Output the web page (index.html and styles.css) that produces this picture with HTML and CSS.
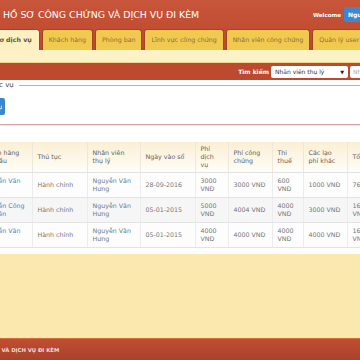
FILE: index.html
```html
<!DOCTYPE html>
<html lang="vi">
<head>
<meta charset="utf-8">
<title>Hồ sơ công chứng</title>
<link rel="stylesheet" href="styles.css">
</head>
<body>
<div class="app">
  <header class="top">
    <div class="brand">
      <h1 class="title">HỒ SƠ CÔNG CHỨNG VÀ DỊCH VỤ ĐI KÈM</h1>
      <div class="user"><span class="welcome">Welcome</span><span class="user-btn">Nguyễn Văn Hưng</span></div>
    </div>
    <nav class="tabs">
      <span class="tab active">Hồ sơ dịch vụ</span>
      <span class="tab">Khách hàng</span>
      <span class="tab">Phòng ban</span>
      <span class="tab">Lĩnh vực công chứng</span>
      <span class="tab">Nhân viên công chứng</span>
      <span class="tab">Quản lý user</span>
    </nav>
  </header>
  <div class="strip"></div>
  <div class="searchbar">
    <span class="search-label">Tìm kiếm</span>
    <div class="select"><span>Nhân viên thụ lý</span><span class="arrow">▼</span></div>
    <div class="input">Nhập từ khóa</div>
  </div>
  <main class="content">
    <fieldset class="box">
      <legend>Phục vụ</legend>
      <button class="add">Thêm dịch vụ</button>
    </fieldset>
    <table class="grid">
      <colgroup>
        <col class="c1"><col class="c2"><col class="c3"><col class="c4"><col class="c5"><col class="c6"><col class="c7"><col class="c8"><col class="c9">
      </colgroup>
      <thead>
        <tr><th>Khách hàng yêu cầu</th><th>Thủ tục</th><th>Nhân viên thụ lý</th><th>Ngày vào sổ</th><th>Phí dịch vụ</th><th>Phí công chứng</th><th>Thi thuế</th><th>Các lạo phí khác</th><th>Tổng tiền</th></tr>
      </thead>
      <tbody>
        <tr><td><a>Nguyễn Văn An</a></td><td>Hành chính</td><td>Nguyễn Văn Hưng</td><td>28-09-2016</td><td>3000 VNĐ</td><td>3000 VNĐ</td><td>600 VNĐ</td><td>1000 VNĐ</td><td>7600 VNĐ</td></tr>
        <tr><td><a>Nguyễn Công Nguyên</a></td><td>Hành chính</td><td>Nguyễn Văn Hưng</td><td>05-01-2015</td><td>5000 VNĐ</td><td>4004 VNĐ</td><td>4000 VNĐ</td><td>3000 VNĐ</td><td>16004 VNĐ</td></tr>
        <tr><td><a>Nguyễn Văn Ba</a></td><td>Hành chính</td><td>Nguyễn Văn Hưng</td><td>05-01-2015</td><td>4000 VNĐ</td><td>4000 VNĐ</td><td>4000 VNĐ</td><td>4000 VNĐ</td><td>16000 VNĐ</td></tr>
      </tbody>
    </table>
  </main>
  <div class="filler"></div>
  <footer class="foot"><span class="foot-text">HỒ SƠ CÔNG CHỨNG VÀ DỊCH VỤ ĐI KÈM</span></footer>
</div>
</body>
</html>
```
FILE: styles.css
```css
* { box-sizing: border-box; }
html, body { margin: 0; padding: 0; }
body {
  width: 360px;
  height: 360px;
  overflow: hidden;
  font-family: "DejaVu Sans", Verdana, sans-serif;
  background: #fbe8ae;
}
.app {
  width: 360px;
  height: 360px;
  display: flex;
  flex-direction: column;
  overflow: hidden;
}
.top {
  background: linear-gradient(#c8563b, #bc472d);
}
.brand {
  height: 29px;
  display: flex;
  align-items: center;
  justify-content: space-between;
}
.title {
  margin: 0 0 0 3px;
  font-size: 9.4px;
  font-weight: normal;
  color: #fff;
  white-space: nowrap;
}
.user {
  width: 47px;
  display: flex;
  align-items: center;
  gap: 3px;
  overflow: hidden;
  white-space: nowrap;
}
.welcome {
  font-size: 5.5px;
  font-weight: bold;
  color: #fff;
  flex-shrink: 0;
}
.user-btn {
  flex-shrink: 0;
  background: #3b88cf;
  color: #fff;
  font-weight: bold;
  font-size: 6px;
  padding: 4px 4px;
  border-radius: 2px;
}
.tabs {
  display: flex;
  align-items: flex-end;
  gap: 2px;
  height: 21px;
  margin-left: -24px;
  white-space: nowrap;
}
.tab {
  height: 21px;
  line-height: 20px;
  padding: 0 6px;
  font-size: 6.3px;
  color: #8c6d3c;
  background: #f1c94f;
  border: 1px solid #a4432a;
  border-bottom: 0;
  border-radius: 3px 3px 0 0;
  flex-shrink: 0;
}
.tab.active {
  background: #fdf1c4;
  color: #6a4f2c;
  font-weight: bold;
  padding: 0 7px;
}
.strip {
  height: 13px;
  background: #fdf2c5;
  border-bottom: 1px solid #f1d58c;
}
.searchbar {
  height: 17px;
  background: #bd4a2f;
  display: flex;
  align-items: center;
  justify-content: flex-end;
  gap: 2px;
  overflow: hidden;
}
.search-label {
  font-size: 6px;
  font-weight: bold;
  color: #fff;
  white-space: nowrap;
}
.select {
  width: 77px;
  height: 12px;
  background: #fff;
  border-radius: 2px;
  display: flex;
  align-items: center;
  justify-content: space-between;
  padding: 0 4px;
  font-size: 6px;
  color: #333;
  white-space: nowrap;
}
.arrow { font-size: 5px; color: #222; }
.input {
  width: 30px;
  height: 12px;
  margin-right: -20px;
  background: #fff;
  border-radius: 2px;
  padding: 0 3px;
  font-size: 6px;
  line-height: 12px;
  color: #aaa;
  white-space: nowrap;
  overflow: hidden;
  flex-shrink: 0;
}
.content {
  background: #fff;
  padding: 1px 0 6px;
  overflow: hidden;
}
.box {
  margin: 0 -10px 0 -20px;
  padding: 8px 0 9px;
  border: 1px solid #d6a3a3;
  box-shadow: 0 1px 0 #f3e4e4;
}
.box legend {
  margin: 0;
  padding: 0 5px;
  font-size: 7px;
  line-height: 9px;
  color: #444;
}
.add {
  display: block;
  margin-left: -28px;
  height: 17px;
  padding: 0 3px 0 5px;
  background: #3b87cf;
  color: #fff;
  border: 0;
  border-radius: 2px;
  font-family: "DejaVu Sans", Verdana, sans-serif;
  font-size: 6.5px;
  white-space: nowrap;
}
.grid {
  margin: 17px 0 0 -23px;
  border-collapse: collapse;
  table-layout: fixed;
  width: 414px;
  font-size: 6.3px;
  line-height: 8px;
}
.c1 { width: 55px; }
.c2 { width: 55px; }
.c3 { width: 53px; }
.c4 { width: 55px; }
.c5 { width: 33px; }
.c6 { width: 44px; }
.c7 { width: 31px; }
.c8 { width: 44px; }
.c9 { width: 44px; }
.grid th {
  text-align: left;
  vertical-align: middle;
  font-weight: normal;
  color: #5f5f5f;
  padding: 3px 5px;
  background: linear-gradient(#fbefd3, #fffdf9);
  border-right: 1px solid #efe8da;
  border-bottom: 1px solid #e2e2e2;
}
.grid td {
  vertical-align: middle;
  color: #777;
  padding: 4px 5px;
  border-right: 1px solid #ececec;
  border-bottom: 1px solid #e3e3e3;
  background: #fdfdfd;
}
.grid tbody tr:nth-child(2) td { background: #f6f6f6; }
.grid a { color: #4a86c2; }
.filler { flex: 1; background: #fbe8ae; }
.foot {
  height: 22px;
  flex-shrink: 0;
  background: linear-gradient(#c04e33, #a9412a);
  border-top: 1px solid #d66d3c;
  display: flex;
  align-items: center;
  overflow: hidden;
}
.foot-text {
  margin-left: -62px;
  font-size: 5.3px;
  font-weight: bold;
  color: #f4dccd;
  white-space: nowrap;
}
```
